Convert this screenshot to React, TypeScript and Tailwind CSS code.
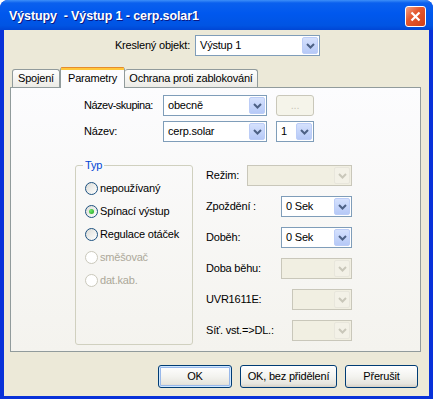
import clsx from 'clsx';

const FONT = "font-['Liberation_Sans',Arial,sans-serif]";

function Chevron({ disabled }: { disabled?: boolean }) {
  return (
    <svg width="9" height="6" viewBox="0 0 9 6">
      <path
        d="M1 1 L4.5 4.5 L8 1"
        fill="none"
        stroke={disabled ? '#c9c7ba' : '#4d6185'}
        strokeWidth="2"
      />
    </svg>
  );
}

function Combo({ value, className, disabled }: { value?: string; className: string; disabled?: boolean }) {
  return (
    <div
      className={clsx(
        'flex h-[21px] shrink-0 border p-[1px]',
        disabled ? 'border-[#c9c7ba] bg-[#f1efe2]' : 'border-[#7f9db9] bg-white',
        className
      )}
    >
      <span className="flex-1 truncate pl-[3px] leading-[17px] text-black">{value}</span>
      <span
        className={clsx(
          'flex h-[17px] w-[16px] items-center justify-center rounded-[2px] border',
          disabled
            ? 'border-[#e8e6dc] bg-[#f3f1e7]'
            : 'border-[#bccdf7] bg-[linear-gradient(to_bottom,#d5e1fd,#b6c9f7)]'
        )}
      >
        <Chevron disabled={disabled} />
      </span>
    </div>
  );
}

function Radio({ label, checked, disabled }: { label: string; checked?: boolean; disabled?: boolean }) {
  return (
    <div className="flex h-[23px] items-center gap-[2px]">
      <span
        className={clsx(
          'flex h-[13px] w-[13px] items-center justify-center rounded-full border',
          disabled
            ? 'border-[#cac8bb] bg-white'
            : 'border-[#1c5180] bg-[linear-gradient(135deg,#dcdcd7,#ffffff)]'
        )}
      >
        {checked && (
          <span className="h-[5px] w-[5px] rounded-full bg-[radial-gradient(circle_at_35%_35%,#6ee86a,#21a121)]" />
        )}
      </span>
      <span className={disabled ? 'text-[#aca899]' : 'text-black'}>{label}</span>
    </div>
  );
}

function XpButton({ label, className, primary }: { label: string; className: string; primary?: boolean }) {
  return (
    <button
      className={clsx(
        'h-[23px] rounded-[3px] border border-[#003c74] bg-[linear-gradient(to_bottom,#ffffff,#f3f3ef_50%,#e6e5de_85%,#d6d0c5)] text-black',
        primary && 'shadow-[inset_0_0_0_1px_#cee7ff,inset_0_0_0_2px_#98b8ea]',
        className
      )}
    >
      {label}
    </button>
  );
}

function Row({ label, children }: { label: string; children: React.ReactNode }) {
  return (
    <div className="flex h-[21px] items-center justify-between">
      <span>{label}</span>
      {children}
    </div>
  );
}

export default function App() {
  return (
    <div className={clsx('h-[399px] w-[433px] whitespace-nowrap bg-white text-[11px] tracking-[-0.2px]', FONT)}>
      <div className="flex h-full w-full flex-col overflow-hidden rounded-t-[8px] bg-[#0831d9]">
        {/* title bar */}
        <div className="flex h-[30px] shrink-0 items-center justify-between bg-[linear-gradient(to_bottom,#3d8ff8_0%,#0a60ee_10%,#0058ee_45%,#0054e3_85%,#0046d5_100%)] pl-[9px] pr-[7px] pt-[3px]">
          <span className="whitespace-pre text-[12.5px] font-bold tracking-[-0.1px] text-white [text-shadow:1px_1px_0_#0a1883]">
            Výstupy  - Výstup 1 - cerp.solar1
          </span>
          <span className="flex h-[21px] w-[21px] items-center justify-center rounded-[3px] border border-white bg-[linear-gradient(135deg,#f2a286_0%,#e4582f_40%,#cf3f18_100%)]">
            <svg width="11" height="11" viewBox="0 0 11 11">
              <path d="M1.5 1.5 L9.5 9.5 M9.5 1.5 L1.5 9.5" stroke="white" strokeWidth="2.2" />
            </svg>
          </span>
        </div>

        {/* body */}
        <div className="mx-[4px] mb-[3px] flex flex-1 flex-col bg-[#ece9d8]">
          <div className="mt-[5px] flex h-[21px] items-center">
            <span className="w-[186px] text-right">Kreslený objekt:</span>
            <Combo value="Výstup 1" className="ml-[5px] w-[125px]" />
          </div>

          {/* tabs */}
          <div className="ml-[6px] mr-[8px] mt-[11px]">
            <div className="relative z-10 flex h-[21px] items-end pl-[2px]">
              <span className="mb-[1px] flex h-[18px] w-[48px] items-center justify-center rounded-t-[3px] border border-b-0 border-[#919b9c] bg-[linear-gradient(to_bottom,#fefefe,#ecebe6)]">
                Spojení
              </span>
              <span className="flex h-[21px] w-[65px] flex-col rounded-t-[3px] border-x border-[#919b9c] bg-[#fcfcfe]">
                <span className="h-[1px] rounded-t-[3px] bg-[#e68b2c]" />
                <span className="h-[2px] bg-[#ffc73c]" />
                <span className="flex flex-1 items-center justify-center pb-[2px]">Parametry</span>
              </span>
              <span className="mb-[1px] flex h-[18px] w-[133px] items-center justify-center rounded-t-[3px] border border-b-0 border-l-0 border-[#919b9c] bg-[linear-gradient(to_bottom,#fefefe,#ecebe6)]">
                Ochrana proti zablokování
              </span>
            </div>

            <div className="-mt-[1px] h-[265px] border border-[#919b9c] bg-[linear-gradient(to_bottom,#fcfcfe,#f4f3ee)] pt-[7px]">
              <div className="flex h-[21px] items-center">
                <span className="ml-[73px] w-[79px] tracking-[-0.5px]">Název-skupina:</span>
                <Combo value="obecně" className="w-[104px]" />
                <span className="ml-[9px] flex h-[21px] w-[38px] items-center justify-center rounded-[3px] border border-[#c9c7ba] bg-[#f5f4ea] text-[#c9c7ba]">
                  ...
                </span>
              </div>
              <div className="mt-[5px] flex h-[21px] items-center">
                <span className="ml-[73px] w-[79px]">Název:</span>
                <Combo value="cerp.solar" className="w-[104px]" />
                <Combo value="1" className="ml-[9px] w-[38px]" />
              </div>

              <div className="mt-[17px] flex items-start">
                <fieldset className="ml-[64px] h-[186px] w-[118px] rounded-[3px] border border-[#d0d0bf] pl-[9px]">
                  <legend className="ml-[-2px] px-[2px] leading-[13px] text-[#0046d5]">Typ</legend>
                  <div className="pt-[5px]">
                    <Radio label="nepoužívaný" />
                    <Radio label="Spínací výstup" checked />
                    <Radio label="Regulace otáček" />
                    <Radio label="směšovač" disabled />
                    <Radio label="dat.kab." disabled />
                  </div>
                </fieldset>

                <div className="ml-[13px] mt-[6px] flex w-[146px] flex-col gap-[10px]">
                  <Row label="Režim:">
                    <Combo disabled className="w-[105px]" />
                  </Row>
                  <Row label="Zpoždění :">
                    <Combo value="0 Sek" className="w-[71px]" />
                  </Row>
                  <Row label="Doběh:">
                    <Combo value="0 Sek" className="w-[71px]" />
                  </Row>
                  <Row label="Doba běhu:">
                    <Combo disabled className="w-[71px]" />
                  </Row>
                  <Row label="UVR1611E:">
                    <Combo disabled className="w-[60px]" />
                  </Row>
                  <Row label="Síť. vst.=>DL.:">
                    <Combo disabled className="w-[60px]" />
                  </Row>
                </div>
              </div>
            </div>
          </div>

          {/* buttons */}
          <div className="mt-[13px] flex justify-end gap-[8px] pr-[11px]">
            <XpButton label="OK" primary className="w-[74px]" />
            <XpButton label="OK, bez přidělení" className="w-[97px]" />
            <XpButton label="Přerušit" className="w-[73px]" />
          </div>
        </div>
      </div>
    </div>
  );
}
